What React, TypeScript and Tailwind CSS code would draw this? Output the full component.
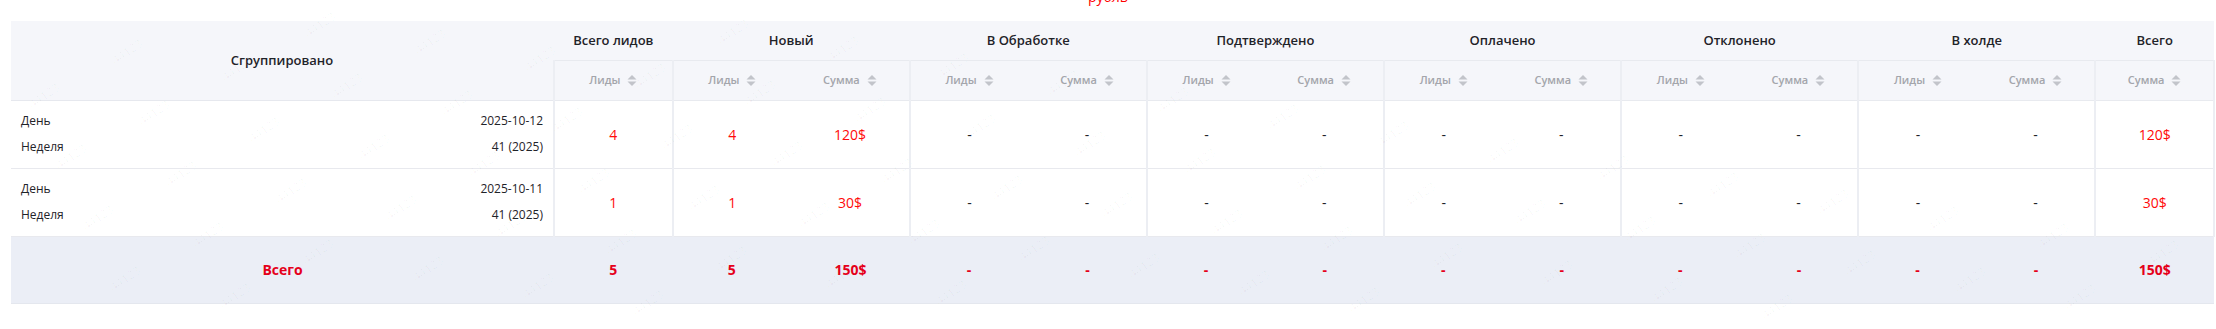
import React from "react";

const FONT = { fontFamily: '"Open Sans", "Noto Sans", sans-serif' };

type Group = { title: string; cols: string[] };

const GROUPS: Group[] = [
	{ title: "Всего лидов", cols: ["Лиды"] },
	{ title: "Новый", cols: ["Лиды", "Сумма"] },
	{ title: "В Обработке", cols: ["Лиды", "Сумма"] },
	{ title: "Подтверждено", cols: ["Лиды", "Сумма"] },
	{ title: "Оплачено", cols: ["Лиды", "Сумма"] },
	{ title: "Отклонено", cols: ["Лиды", "Сумма"] },
	{ title: "В холде", cols: ["Лиды", "Сумма"] },
	{ title: "Всего", cols: ["Сумма"] },
];

const ROWS = [
	{ day: "2025-10-12", week: "41 (2025)", values: ["4", "4", "120$", "-", "-", "-", "-", "-", "-", "-", "-", "-", "-", "120$"] },
	{ day: "2025-10-11", week: "41 (2025)", values: ["1", "1", "30$", "-", "-", "-", "-", "-", "-", "-", "-", "-", "-", "30$"] },
];

const TOTALS = ["5", "5", "150$", "-", "-", "-", "-", "-", "-", "-", "-", "-", "-", "150$"];

// sub-columns that open a new group get a left border
const GROUP_STARTS = [0, 1, 3, 5, 7, 9, 11, 13];

const SortIcon = () => (
	<svg width="10" height="13" viewBox="0 0 10 13" className="ml-[7px] shrink-0">
		<path d="M0.5 5.5 L5 1 L9.5 5.5 Z" fill="#c2c4ca" />
		<path d="M0.5 7.5 L5 12 L9.5 7.5 Z" fill="#c2c4ca" />
	</svg>
);

const Watermark = () => {
	const marks: { x: number; y: number }[] = [];
	for (let i = -6; i < 30; i++) {
		for (let j = -2; j < 10; j++) {
			const x = 110 + 110 * i - 83 * j;
			const y = 43 + 17 * i + 44 * j;
			if (x > 10 && x < 2170 && y > 10 && y < 300) marks.push({ x, y });
		}
	}
	return (
		<div className="absolute inset-0 overflow-hidden pointer-events-none" aria-hidden="true">
			{marks.map((m, k) => (
				<span
					key={k}
					className="absolute text-[12px] text-black/[0.035] -rotate-[35deg] select-none"
					style={{ left: m.x, top: m.y }}
				>
					44123
				</span>
			))}
		</div>
	);
};

export default function App() {
	return (
		<div className="relative w-[2216px] h-[329px] bg-white overflow-hidden" style={FONT}>
			<div className="h-[21px] overflow-hidden flex justify-center">
				<span className="text-[14px] leading-[14px] text-[#ff0000] -mt-[10px]">рубль</span>
			</div>

			<div className="pl-[11px]">
				<table className="table-fixed border-collapse w-[2204px]">
					<colgroup>
						<col className="w-[543px]" />
						{Array.from({ length: 14 }).map((_, i) => (
							<col key={i} />
						))}
					</colgroup>
					<thead>
						<tr className="bg-[#f5f6fa] h-[39px]">
							<th
								rowSpan={2}
								className="text-[13px] font-semibold text-[#1f2329] text-center border-b border-[#e6e8ee]"
							>
								Сгруппировано
							</th>
							{GROUPS.map((g) => (
								<th
									key={g.title}
									colSpan={g.cols.length}
									className="text-[13px] font-semibold text-[#1f2329] text-center"
								>
									{g.title}
								</th>
							))}
						</tr>
						<tr className="bg-[#f5f6fa] h-[40px]">
							{GROUPS.flatMap((g, gi) =>
								g.cols.map((c, ci) => (
									<th
										key={`${gi}-${ci}`}
										className={`border-t border-b border-[#e8eaef] ${ci === 0 ? "border-l-2 border-l-[#eceef3]" : ""} ${gi === GROUPS.length - 1 ? "border-r-2 border-r-[#eceef3]" : ""}`}
									>
										<div className="flex items-center justify-center text-[11px] font-semibold text-[#a3a5ab]">
											<span>{c}</span>
											<SortIcon />
										</div>
									</th>
								))
							)}
						</tr>
					</thead>
					<tbody>
						{ROWS.map((r) => (
							<tr key={r.day} className="h-[68px] border-b border-[#e8e9ee]">
								<td className="px-[10px]">
									<div className="flex flex-col gap-[6px] text-[12px] leading-[20px] text-[#1f2329]">
										<div className="flex justify-between">
											<span>День</span>
											<span>{r.day}</span>
										</div>
										<div className="flex justify-between">
											<span>Неделя</span>
											<span>{r.week}</span>
										</div>
									</div>
								</td>
								{r.values.map((v, i) => (
									<td
										key={i}
										className={`text-center text-[14px] ${v === "-" ? "text-[#1f2329]" : "text-[#ff0a0a]"} ${GROUP_STARTS.includes(i) ? "border-l-2 border-l-[#eceef3]" : ""} ${i === 13 ? "border-r-2 border-r-[#eceef3]" : ""}`}
									>
										{v}
									</td>
								))}
							</tr>
						))}
						<tr className="h-[67px] bg-[#ebeef6] border-b border-[#e4e7ee]">
							<td className="text-center text-[14px] font-bold text-[#e5001a]">Всего</td>
							{TOTALS.map((v, i) => (
								<td key={i} className="text-center text-[14px] font-bold text-[#e5001a]">
									{v}
								</td>
							))}
						</tr>
					</tbody>
				</table>
			</div>

			<Watermark />
		</div>
	);
}
